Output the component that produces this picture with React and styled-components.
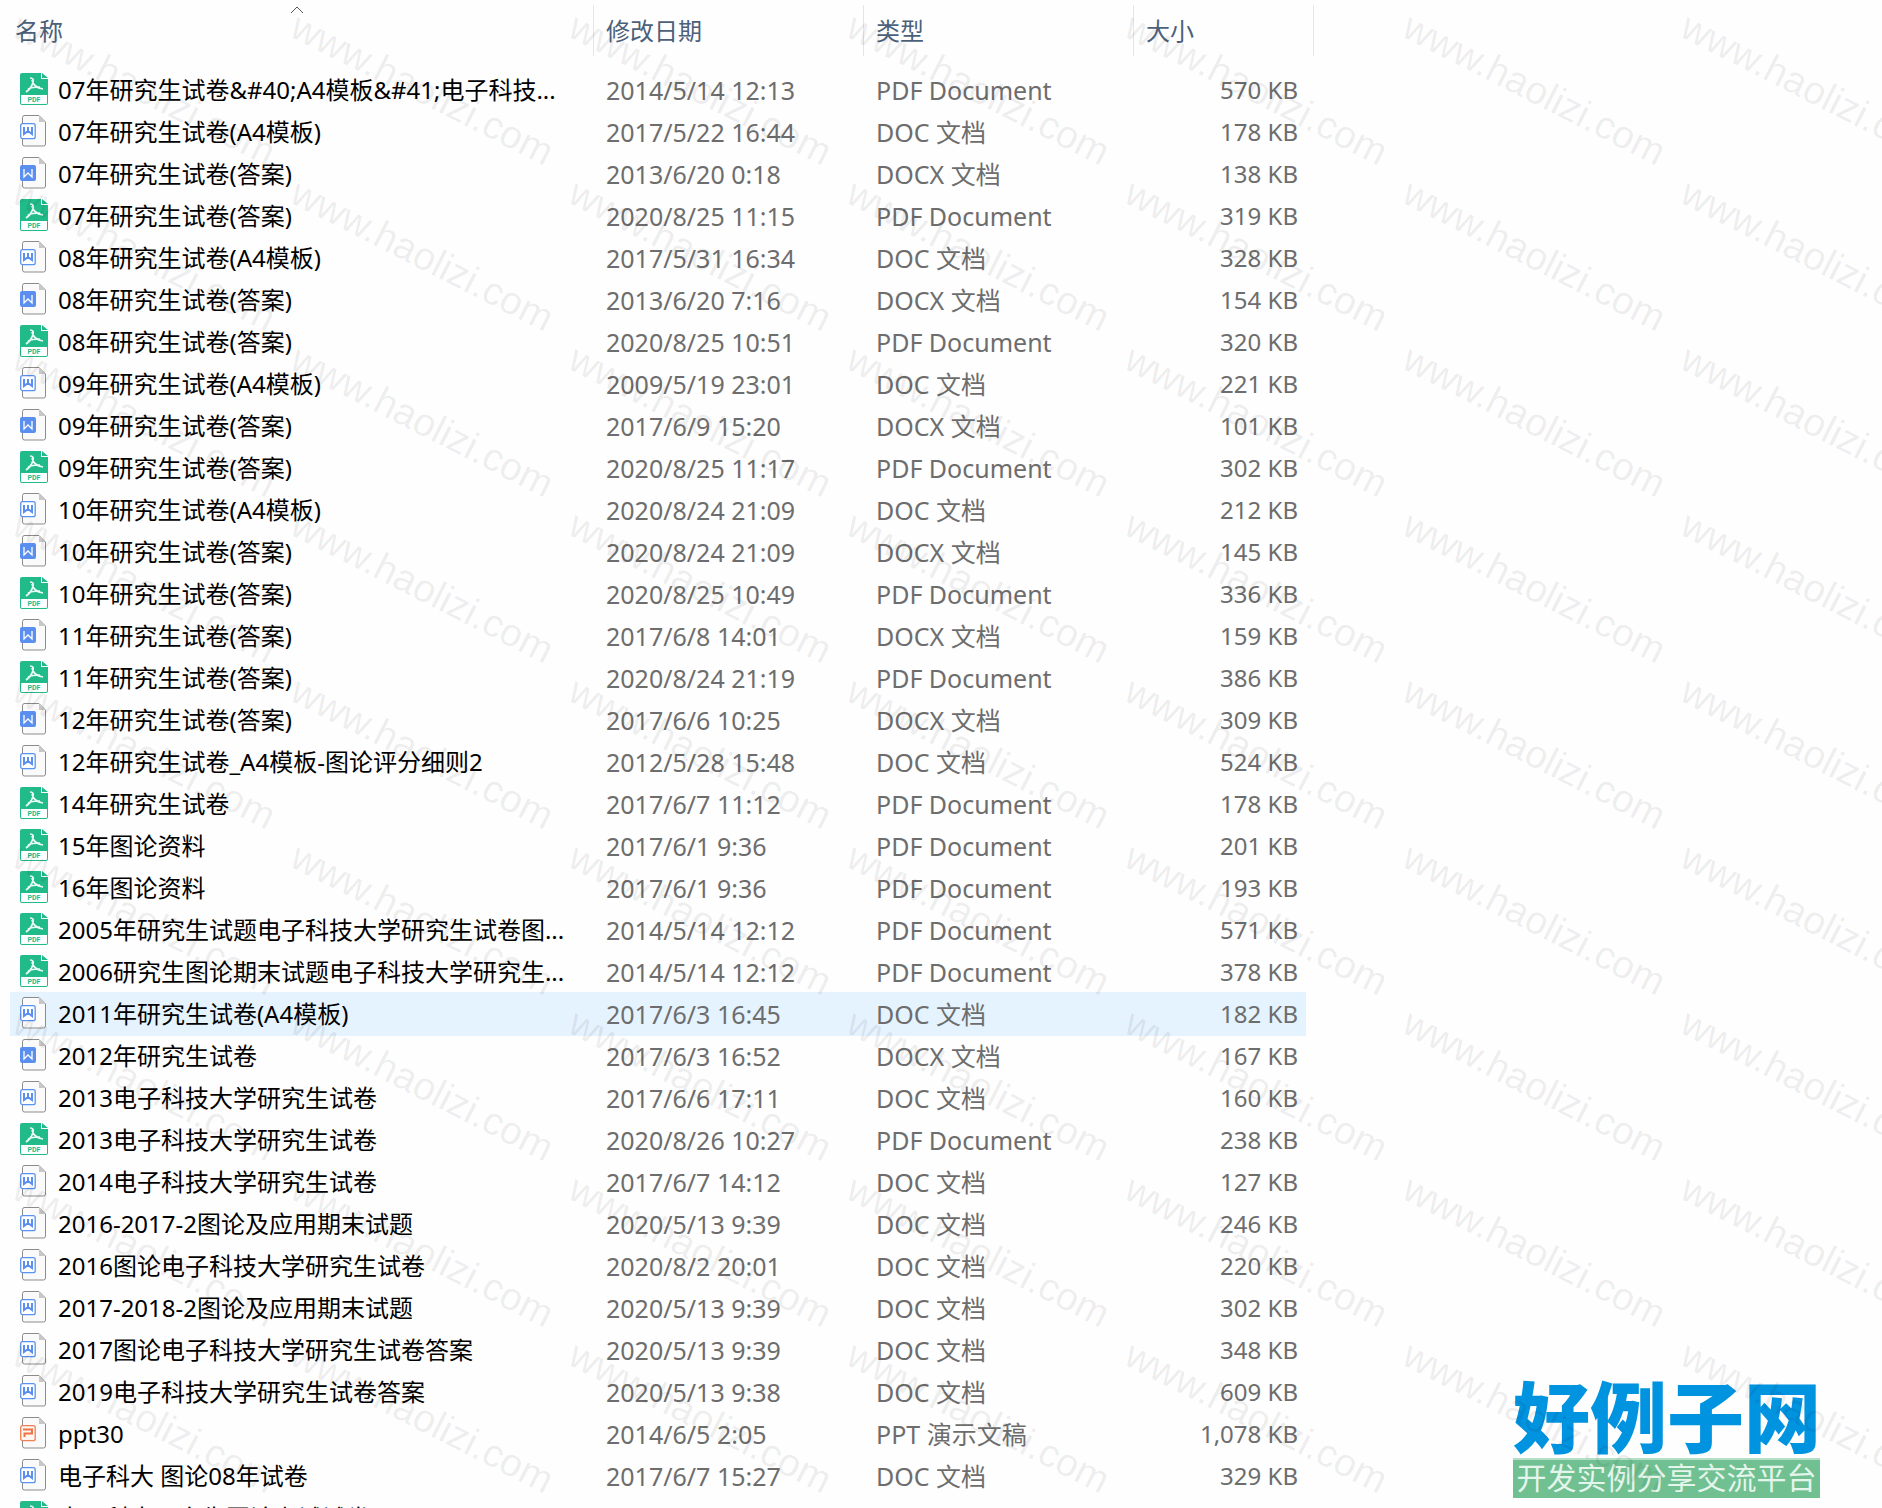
import styled, { createGlobalStyle } from 'styled-components'

const GlobalStyle = createGlobalStyle`
	body {
		margin: 0;
		background-color: #fefefe;
		font-family: "Noto Sans", "Noto Sans CJK SC", sans-serif;
	}
`
const Page = styled.main`
	position: relative;
	height: 100vh;
	overflow: hidden;
`
const FileTable = styled.table`
	display: block;
	width: 1314px;
	font-size: 24px;
	line-height: 32px;
	white-space: nowrap;
`
const TableHead = styled.thead`
	display: block;
	padding: 5px 0 13px;
`
const TableBody = styled.tbody`
	display: block;
	padding: 0 8px 0 10px;
`
const HeadRow = styled.tr`
	display: grid;
	grid-template-columns: 594px 270px 270px 180px;
`
const HeadCell = styled.th`
	position: relative;
	height: 51px;
	box-sizing: border-box;
	padding: ${props => props.$first ? '10px 15px' : '10px 12px'};
	border-right: 1px solid #e5e5e5;
	color: #4c607a;
	font-weight: 400;
	text-align: left;
`
const SortMark = styled.svg`
	position: absolute;
	top: 0;
	left: 50%;
	width: 14px;
	height: 9px;
	transform: translateX(-50%);
`
const Row = styled.tr`
	display: grid;
	grid-template-columns: 584px 270px 270px 172px;
	height: 42px;
	align-items: center;
	${props => props.$active ? `
		background-color: #e5f3ff;
		box-shadow: 0 1px #e5f3ff, 0 -1px #e5f3ff;
	` : ''}
`
const NameCell = styled.td`
	display: flex;
	align-items: center;
	gap: 9px;
	padding: 0 0 0 10px;
	color: #000;
`
const Cell = styled.td`
	padding: 0 0 0 12px;
	font-size: 25px;
	color: #6d6d6d;
`
const SizeCell = styled(Cell)`
	padding: 0 8px 0 0;
	font-size: 24px;
	text-align: right;
`
const Icon = styled.svg`
	flex: none;
	width: 29px;
	height: 34px;
`
const Watermark = styled.div`
	position: absolute;
	inset: 0 -278px 0 0;
	display: grid;
	grid-template-columns: repeat(auto-fill, 278px);
	grid-auto-rows: 166px;
	overflow: hidden;
	pointer-events: none;
`
const Mark = styled.span`
	padding: 0 0 0 25px;
	font-family: "Liberation Sans", sans-serif;
	font-size: 39px;
	line-height: 28px;
	white-space: nowrap;
	color: rgba(0, 0, 0, 0.075);
	transform: rotate(27deg);
	transform-origin: 0 0;
`
const Brand = styled.aside`
	position: absolute;
	right: 62px;
	bottom: 10px;
	width: 307px;
	text-align: center;
	white-space: nowrap;
`
const BrandName = styled.div`
	font-family: "Noto Sans CJK SC", sans-serif;
	font-size: 77px;
	font-weight: 900;
	line-height: 88px;
	color: #0093e0;
`
const BrandSlogan = styled.div`
	box-sizing: border-box;
	height: 40px;
	border-top: 2px solid #b4dfc6;
	background-color: #70c092;
	font-family: "Noto Sans CJK SC", sans-serif;
	font-size: 30px;
	line-height: 32px;
	color: #e4f5eb;
`

const PdfIcon = () => (
	<Icon viewBox="0 1 29 34">
		<path d="M2 1h19v6h7v24a2 2 0 0 1-2 2H2a2 2 0 0 1-2-2V3a2 2 0 0 1 2-2z" fill="#21bb8a"/>
		<path d="M22 1l6 5h-6z" fill="#21bb8a"/>
		<path d="M1 23h26v8a1 1 0 0 1-1 1H2a1 1 0 0 1-1-1z" fill="#fff"/>
		<path d="M10 6c4 0 4 3 2 7-1 3-3 5-6 7M12 8c1 5 4 8 11 9M8 17c4-2 8-2 12-2" fill="none" stroke="#e9faf4" strokeWidth="1.7"/>
		<text x="14" y="30" textAnchor="middle" fontFamily="Roboto, sans-serif" fontSize="7" fontWeight="700" fill="#21bb8a">PDF</text>
	</Icon>
)
const Sheet = () => (
	<>
		<path d="M4 2.500h15l6.500 6.500v22a2 2 0 0 1-2 2H4.500a2 2 0 0 1-2-2V4.500a2 2 0 0 1 2-2z" fill="#fafafa" stroke="#8c8c8c"/>
		<path d="M19 2.500v6.500h6.500z" fill="#c8c8c8"/>
	</>
)
const DocIcon = () => (
	<Icon viewBox="0 2 29 34">
		<Sheet/>
		<rect x="0.700" y="10.700" width="14.500" height="15" rx="2" fill="#fff" stroke="#5a93f2" strokeWidth="1.300"/>
		<path d="M4 14v7l4-3 4 3v-7M8 14v4" fill="none" stroke="#5a8ff0" strokeWidth="2"/>
	</Icon>
)
const DocxIcon = () => (
	<Icon viewBox="0 2 29 34">
		<Sheet/>
		<rect x="0" y="10" width="16" height="16" rx="2" fill="#5a8ff0"/>
		<path d="M4 14v8l4-4 4 4v-8" fill="none" stroke="#fff" strokeWidth="1.3"/>
	</Icon>
)
const PptIcon = () => (
	<Icon viewBox="0 2 29 34">
		<Sheet/>
		<rect x="0.700" y="10.700" width="14.500" height="15" rx="2" fill="#fff6f2" stroke="#f08055" strokeWidth="1.300"/>
		<path d="M3 14.500h9v4H4.500V22" fill="none" stroke="#ee7444" strokeWidth="2"/>
	</Icon>
)

const kinds = {
	pdf: { label: 'PDF Document', icon: PdfIcon },
	doc: { label: 'DOC 文档', icon: DocIcon },
	docx: { label: 'DOCX 文档', icon: DocxIcon },
	ppt: { label: 'PPT 演示文稿', icon: PptIcon },
}

const files = [
	['07年研究生试卷&#40;A4模板&#41;电子科技...', '2014/5/14 12:13', 'pdf', '570 KB'],
	['07年研究生试卷(A4模板)', '2017/5/22 16:44', 'doc', '178 KB'],
	['07年研究生试卷(答案)', '2013/6/20 0:18', 'docx', '138 KB'],
	['07年研究生试卷(答案)', '2020/8/25 11:15', 'pdf', '319 KB'],
	['08年研究生试卷(A4模板)', '2017/5/31 16:34', 'doc', '328 KB'],
	['08年研究生试卷(答案)', '2013/6/20 7:16', 'docx', '154 KB'],
	['08年研究生试卷(答案)', '2020/8/25 10:51', 'pdf', '320 KB'],
	['09年研究生试卷(A4模板)', '2009/5/19 23:01', 'doc', '221 KB'],
	['09年研究生试卷(答案)', '2017/6/9 15:20', 'docx', '101 KB'],
	['09年研究生试卷(答案)', '2020/8/25 11:17', 'pdf', '302 KB'],
	['10年研究生试卷(A4模板)', '2020/8/24 21:09', 'doc', '212 KB'],
	['10年研究生试卷(答案)', '2020/8/24 21:09', 'docx', '145 KB'],
	['10年研究生试卷(答案)', '2020/8/25 10:49', 'pdf', '336 KB'],
	['11年研究生试卷(答案)', '2017/6/8 14:01', 'docx', '159 KB'],
	['11年研究生试卷(答案)', '2020/8/24 21:19', 'pdf', '386 KB'],
	['12年研究生试卷(答案)', '2017/6/6 10:25', 'docx', '309 KB'],
	['12年研究生试卷_A4模板-图论评分细则2', '2012/5/28 15:48', 'doc', '524 KB'],
	['14年研究生试卷', '2017/6/7 11:12', 'pdf', '178 KB'],
	['15年图论资料', '2017/6/1 9:36', 'pdf', '201 KB'],
	['16年图论资料', '2017/6/1 9:36', 'pdf', '193 KB'],
	['2005年研究生试题电子科技大学研究生试卷图...', '2014/5/14 12:12', 'pdf', '571 KB'],
	['2006研究生图论期末试题电子科技大学研究生...', '2014/5/14 12:12', 'pdf', '378 KB'],
	['2011年研究生试卷(A4模板)', '2017/6/3 16:45', 'doc', '182 KB'],
	['2012年研究生试卷', '2017/6/3 16:52', 'docx', '167 KB'],
	['2013电子科技大学研究生试卷', '2017/6/6 17:11', 'doc', '160 KB'],
	['2013电子科技大学研究生试卷', '2020/8/26 10:27', 'pdf', '238 KB'],
	['2014电子科技大学研究生试卷', '2017/6/7 14:12', 'doc', '127 KB'],
	['2016-2017-2图论及应用期末试题', '2020/5/13 9:39', 'doc', '246 KB'],
	['2016图论电子科技大学研究生试卷', '2020/8/2 20:01', 'doc', '220 KB'],
	['2017-2018-2图论及应用期末试题', '2020/5/13 9:39', 'doc', '302 KB'],
	['2017图论电子科技大学研究生试卷答案', '2020/5/13 9:39', 'doc', '348 KB'],
	['2019电子科技大学研究生试卷答案', '2020/5/13 9:38', 'doc', '609 KB'],
	['ppt30', '2014/6/5 2:05', 'ppt', '1,078 KB'],
	['电子科大 图论08年试卷', '2017/6/7 15:27', 'doc', '329 KB'],
	['电子科大研究生图论考试试卷', '', 'pdf', ''],
]
const activeIndex = 22

const FileRow = ({name, date, kind, size, active}) => {
	const { label, icon: KindIcon } = kinds[kind]
	return (
		<Row $active={active}>
			<NameCell><KindIcon/>{name}</NameCell>
			<Cell>{date}</Cell>
			<Cell>{date ? label : ''}</Cell>
			<SizeCell>{size}</SizeCell>
		</Row>
	)
}

export default function App() {
	return (
		<Page>
			<GlobalStyle/>
			<FileTable>
				<TableHead>
					<HeadRow>
						<HeadCell $first>
							<SortMark viewBox="0 0 14 9">
								<path d="M1 8l6-6 6 6" fill="none" stroke="#555"/>
							</SortMark>
							名称
						</HeadCell>
						<HeadCell>修改日期</HeadCell>
						<HeadCell>类型</HeadCell>
						<HeadCell>大小</HeadCell>
					</HeadRow>
				</TableHead>
				<TableBody>
					{files.map(([name, date, kind, size], i) => (
						<FileRow key={i} name={name} date={date} kind={kind} size={size} active={i === activeIndex}/>
					))}
				</TableBody>
			</FileTable>
			<Brand>
				<BrandName>好例子网</BrandName>
				<BrandSlogan>开发实例分享交流平台</BrandSlogan>
			</Brand>
			<Watermark aria-hidden="true">
				{Array.from({ length: 70 }, (_, i) => <Mark key={i}>www.haolizi.com</Mark>)}
			</Watermark>
		</Page>
	)
}
